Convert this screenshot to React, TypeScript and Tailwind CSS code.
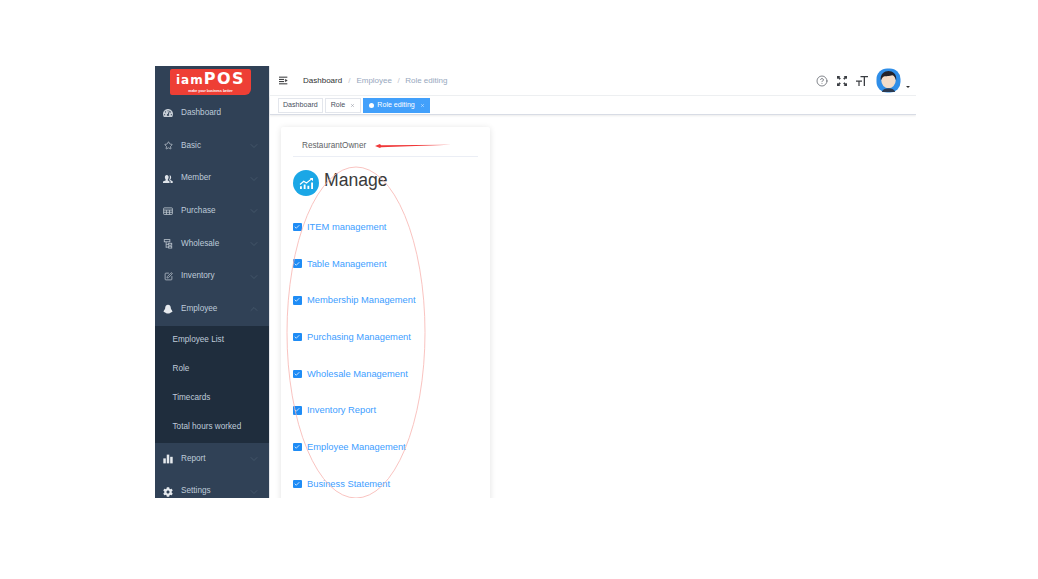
import React from "react";
import { ChevronDown, ChevronUp, CircleHelp, Star, SquarePen, Check, X } from "lucide-react";
import { FaTachometerAlt, FaCog } from "react-icons/fa";

const font = { fontFamily: '"Liberation Sans", Arial, sans-serif' };

function BellIcon() {
  return (
    <svg viewBox="0 0 16 16" className="w-[10px] h-[10px]" fill="#e6eaee">
      <path d="M8 1c3 0 4.500 2.500 4.500 5.500 0 2 1.500 3 2.500 5 .4 1-1 1.500-2 1.500-1 1.500-3 2-5 2s-4-.5-5-2c-1 0-2.400-.5-2-1.500 1-2 2.500-3 2.500-5C3.500 3.500 5 1 8 1z" />
    </svg>
  );
}

function MemberIcon() {
  return (
    <svg viewBox="0 0 16 16" className="w-[10px] h-[10px]" fill="#dfe4ea">
      <path d="M6 1.500c2 0 3 1.500 3 3.500S8 8.500 7.500 9v1l3 2v2.500H0V12l4.500-2V9C4 8.500 3 7 3 5s1-3.500 3-3.500z" />
      <path d="M10.500 2c1.500 0 2.500 1.300 2.500 3s-.8 3-1.300 3.500v1l3.800 2v3H12v-3l-2-1.500V8.500c.5-.8 1-2 1-3.500 0-1-.2-2-.5-3z" />
    </svg>
  );
}

function PurchaseIcon() {
  return (
    <svg viewBox="0 0 16 16" className="w-[10px] h-[10px]" fill="none" stroke="#bfc7d0" strokeWidth="1.300">
      <rect x="1" y="3" width="14" height="10.500" rx="1" />
      <path d="M1 6.500h14M1 10h14M5.500 6.500v7M10.500 6.500v7" />
    </svg>
  );
}

function WholesaleIcon() {
  return (
    <svg viewBox="0 0 16 16" className="w-[10px] h-[10px]" fill="none" stroke="#bfc7d0" strokeWidth="1.300">
      <rect x="2" y="1" width="9" height="3.500" />
      <path d="M5 4.500V14M5 8.500h4M5 13h4" />
      <rect x="9" y="6.800" width="5" height="3" />
      <rect x="9" y="11.500" width="5" height="3" />
    </svg>
  );
}

function ReportIcon() {
  return (
    <svg viewBox="0 0 16 16" className="w-[10px] h-[10px]" fill="#e6eaee">
      <rect x="0.500" y="7" width="4" height="8" />
      <rect x="6" y="1" width="4" height="14" />
      <rect x="11.500" y="4.500" width="4" height="10.500" />
    </svg>
  );
}

const topItems = [
  { label: "Dashboard", icon: <FaTachometerAlt size={10} className="text-[#c7ced6]" />, arrow: false },
  { label: "Basic", icon: <Star size={9} className="text-[#bfc7d0]" />, arrow: true },
  { label: "Member", icon: <MemberIcon />, arrow: true },
  { label: "Purchase", icon: <PurchaseIcon />, arrow: true },
  { label: "Wholesale", icon: <WholesaleIcon />, arrow: true },
  { label: "Inventory", icon: <SquarePen size={9} className="text-[#bfc7d0]" />, arrow: true },
];

const subItems = ["Employee List", "Role", "Timecards", "Total hours worked"];

const perms = [
  "ITEM management",
  "Table Management",
  "Membership Management",
  "Purchasing Management",
  "Wholesale Management",
  "Inventory Report",
  "Employee Management",
  "Business Statement",
];

function MenuRow({ label, icon, arrow, open }: { label: string; icon: React.ReactNode; arrow?: boolean; open?: boolean }) {
  return (
    <div className="h-[32.67px] shrink-0 flex items-center pl-[8px] pr-[9.5px] text-[#bfcbd9] text-[8.2px]">
      <span className="w-[10px] flex justify-center">{icon}</span>
      <span className="ml-[8px] flex-1">{label}</span>
      {arrow && (open ? <ChevronUp size={12} strokeWidth={1} className="text-[#56687c]" /> : <ChevronDown size={12} strokeWidth={1} className="text-[#56687c]" />)}
    </div>
  );
}

function Avatar() {
  return (
    <svg viewBox="0 0 26 26" className="w-[25px] h-[25px]">
      <rect x="0.500" y="0.500" width="25" height="25" rx="11" fill="#2f8ee8" />
      <ellipse cx="13" cy="13" rx="7.500" ry="8" fill="#f3dcc8" />
      <path d="M5 13C4 6 9 3 13 3s9 3 8 10c-1-3-2-5-4-5.500-3 1-7 1-8 1-2 .5-3 2-4 4.500z" fill="#23232b" />
      <path d="M6 25c1-3 4-4 7-4s6 1 7 4z" fill="#2c3a50" />
    </svg>
  );
}

export default function App() {
  return (
    <div className="w-[1038px] h-[579px] bg-white overflow-hidden pl-[155px] pt-[66px]" style={font}>
      <div className="w-[761px] h-[432px] flex overflow-hidden">
        <aside className="w-[114px] shrink-0 bg-[#304156] flex flex-col overflow-hidden">
          <div className="h-[31px] shrink-0 flex items-start pl-[15px] pt-[3px]">
            <div className="w-[81px] h-[26px] bg-[#ee3f35] rounded-[2px] rounded-br-[6px] flex flex-col items-center justify-center">
              <span className="text-white font-black text-[12px] leading-[17px] tracking-[1px]" style={{ fontFamily: '"DejaVu Sans", sans-serif' }}>
                iam<span className="text-[16px] tracking-[1.5px]">POS</span>
              </span>
              <span className="text-white font-bold text-[3.500px] leading-[5px]">make your business better</span>
            </div>
          </div>
          {topItems.map((item) => (
            <MenuRow key={item.label} {...item} />
          ))}
          <MenuRow label="Employee" icon={<BellIcon />} arrow open />
          <div className="bg-[#1f2d3d] shrink-0 py-[0.5px]">
            {subItems.map((s) => (
              <div key={s} className="h-[29px] flex items-center pl-[17.500px] text-[#bfcbd9] text-[8.2px]">
                {s}
              </div>
            ))}
          </div>
          <MenuRow label="Report" icon={<ReportIcon />} arrow />
          <MenuRow label="Settings" icon={<FaCog size={10} className="text-[#e6eaee]" />} arrow />
        </aside>

        <main className="flex-1 min-w-0 flex flex-col relative border-l border-[#e6e8ec]">
          <header className="h-[30px] shrink-0 flex items-center pl-[9px] pr-[6px] border-b border-[#eef0f2]">
            <svg viewBox="0 0 12 10" className="w-[10px] h-[9px]" stroke="#303133" strokeWidth="1.200" fill="none">
              <path d="M0 1h10M0 3.700h6M0 6.300h6M0 9h10" />
              <path d="M7.500 3.500L10 5 7.500 6.500z" fill="#303133" strokeWidth="0.500" />
            </svg>
            <div className="ml-[14px] flex items-center text-[8px]">
              <span className="text-[#303133]">Dashboard</span>
              <span className="mx-[6px] text-[#c0c4cc]">/</span>
              <span className="text-[#97a8be]">Employee</span>
              <span className="mx-[5.500px] text-[#c0c4cc]">/</span>
              <span className="text-[#97a8be]">Role editing</span>
            </div>
            <div className="ml-auto flex items-center text-[#5a5e66]">
              <CircleHelp size={12} strokeWidth={1.500} />
              <svg viewBox="0 0 12 12" className="w-[10px] h-[10px] ml-[9px]" fill="#3a3d42">
                <path d="M0 0h4L2.800 1.200 4.600 3 3 4.600 1.200 2.800 0 4zM12 0v4l-1.200-1.200L9 4.600 7.400 3l1.800-1.800L8 0zM0 12V8l1.200 1.200L3 7.400 4.600 9l-1.800 1.800L4 12zM12 12H8l1.200-1.200L7.400 9 9 7.400l1.800 1.800L12 8z" />
              </svg>
              <svg viewBox="0 0 12 12" className="w-[12px] h-[12px] ml-[9px]" fill="#3a3d42">
                <path d="M4.500 1H12v1.300H9V11H7.700V2.300H4.500zM0 5.500h6v1.200H3.600V11H2.400V6.700H0z" />
              </svg>
              <span className="ml-[8px]"><Avatar /></span>
              <span className="ml-[5px] mt-[12px] w-0 h-0 border-x-[2px] border-x-transparent border-t-[2.500px] border-t-[#303133]" />
            </div>
          </header>

          <nav className="h-[19px] shrink-0 flex items-center gap-[2.500px] pl-[8px] border-b border-[#d8dce5] shadow-[0_1px_2px_rgba(0,0,0,0.08)] text-[7.100px]">
            <span className="h-[15px] px-[4px] flex items-center border border-[#e3e6ec] text-[#495060]">Dashboard</span>
            <span className="h-[15px] px-[4.500px] flex items-center gap-[5px] border border-[#e3e6ec] text-[#495060]">
              Role <X size={5} className="text-[#7b8190]" />
            </span>
            <span className="h-[15px] px-[5.500px] flex items-center bg-[#42a0fb] text-white">
              <span className="w-[5px] h-[5px] rounded-full bg-white mr-[3.500px]" />
              Role editing
              <X size={5} className="ml-[5px]" />
            </span>
          </nav>

          <div className="flex-1 min-h-0 pl-[11px] pt-[12px] overflow-hidden">
            <section className="w-[209px] bg-white rounded-[2px] shadow-[0_1px_6px_rgba(0,0,0,0.12)] px-[12px] pb-[40px]">
              <div className="h-[30px] flex items-center pl-[9px] pt-[9px] border-b border-[#ebeef5] text-[#606266] text-[8.2px]">
                RestaurantOwner
              </div>
              <div className="flex items-center mt-[13px] h-[26px]">
                <span className="w-[26px] h-[26px] rounded-full bg-[#1ba7e6] flex items-center justify-center">
                  <svg viewBox="0 0 16 14" className="w-[15px] h-[13px]" fill="white">
                    <path d="M1 13V10h2v3zM5 13V8h2v5zM9 13V9.500h2V13zM13 13V6h2v7z" />
                    <path d="M1 8l4-3.500 3 2L13.500 2" stroke="white" strokeWidth="1.300" fill="none" />
                    <path d="M11.500 1H15v3.500z" />
                  </svg>
                </span>
                <span className="ml-[5px] text-[17.6px] text-[#3a3a3a] -mt-[6px]">Manage</span>
              </div>
              <ul className="mt-[26.500px] flex flex-col gap-[27.700px]">
                {perms.map((p) => (
                  <li key={p} className="h-[9px] flex items-center text-[#409eff] text-[9.35px]">
                    <span className="w-[8.500px] h-[8.500px] rounded-[1px] bg-[#1f8cf5] flex items-center justify-center shrink-0">
                      <Check size={6} strokeWidth={3} className="text-white" />
                    </span>
                    <span className="ml-[5.500px] whitespace-nowrap">{p}</span>
                  </li>
                ))}
              </ul>
            </section>
          </div>

          {/* red annotations drawn over the screenshot */}
          <svg className="absolute left-0 top-0 pointer-events-none" width="300" height="432" viewBox="0 0 300 432" fill="none">
            <ellipse cx="86" cy="266.500" rx="69" ry="165.500" stroke="#f7b4b0" strokeWidth="0.800" />
            <path d="M105 80L110 78L111 79.200L181 78.700L111 81.200L110 82z" fill="#f0393a" />
          </svg>
        </main>
      </div>
    </div>
  );
}
